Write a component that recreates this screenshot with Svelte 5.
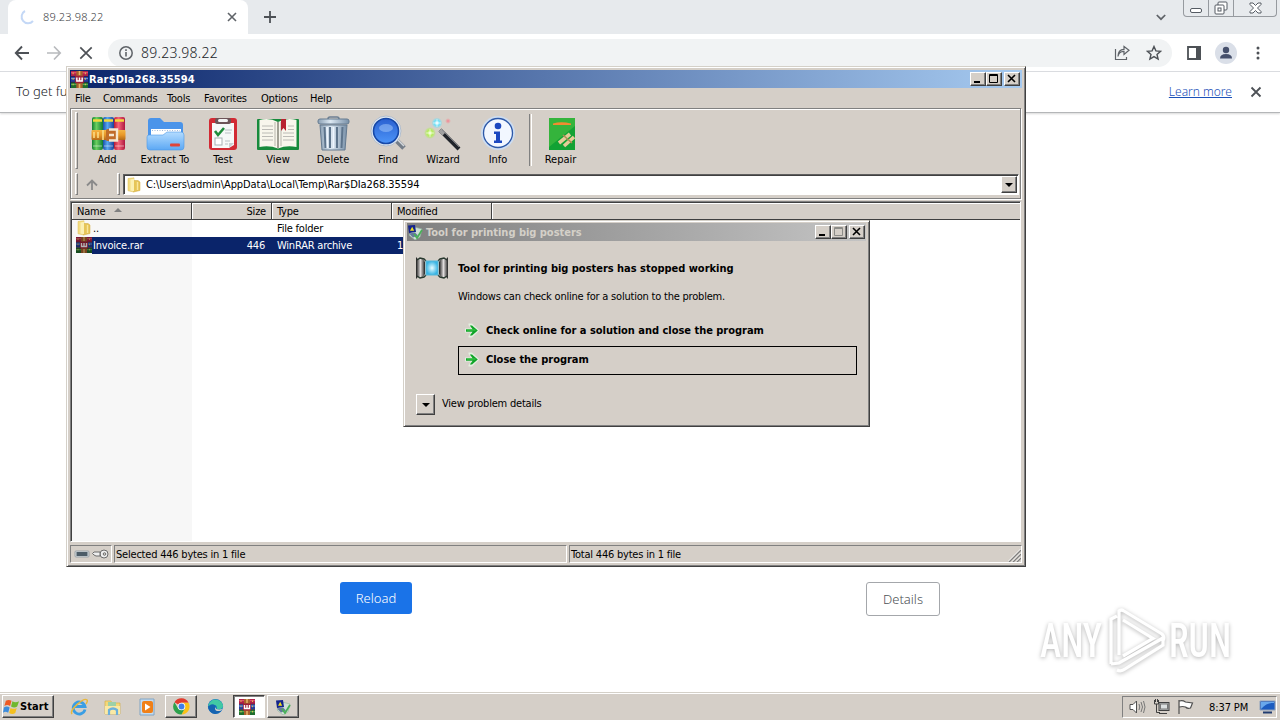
<script lang="ts">
	type Tool = { name: string; width: number };

	const menus = [
		{ label: 'File', width: 28 },
		{ label: 'Commands', width: 64 },
		{ label: 'Tools', width: 37 },
		{ label: 'Favorites', width: 57 },
		{ label: 'Options', width: 49 },
		{ label: 'Help', width: 40 }
	];

	const tools: Tool[] = [
		{ name: 'Add', width: 54 },
		{ name: 'Extract To', width: 62 },
		{ name: 'Test', width: 54 },
		{ name: 'View', width: 56 },
		{ name: 'Delete', width: 54 },
		{ name: 'Find', width: 56 },
		{ name: 'Wizard', width: 54 },
		{ name: 'Info', width: 56 }
	];

	const rows = [
		{ icon: 'folder', name: '..', size: '', type: 'File folder', modified: '' },
		{ icon: 'rar', name: 'Invoice.rar', size: '446', type: 'WinRAR archive', modified: '1' }
	];

	let selected = $state(1);
	let path = 'C:\\Users\\admin\\AppData\\Local\\Temp\\Rar$DIa268.35594';
</script>

{#snippet rarIcon(size: number)}
	<svg width={size} height={size} viewBox="0 0 16 16">
		<rect x="0" y="0" width="16" height="5.2" fill="#b02048" />
		<rect x="0" y="1" width="16" height="1.2" fill="#e0506c" />
		<rect x="0" y="5.2" width="16" height="5.4" fill="#283c98" />
		<rect x="0" y="6.4" width="16" height="1.2" fill="#5c8cdc" />
		<rect x="0" y="10.6" width="16" height="5.400" fill="#1f6c2c" />
		<rect x="0" y="12" width="16" height="1.2" fill="#50a850" />
		<path d="M2 0v16M13.500 0v16" stroke="#e0bc50" stroke-width="1" stroke-dasharray="1.500 3.700" stroke-dashoffset="-1.500" />
		<path d="M0 5.200h16M0 10.600h16" stroke="#301838" stroke-width=".6" />
		<rect x="5" y="0" width="6" height="16" fill="#a8602c" />
		<path d="M8 0v4M8 12v4" stroke="#e8b468" stroke-width="1.500" />
		<rect x="4" y="4.500" width="8" height="7" fill="#a02038" />
		<path d="M5.500 6v3.500h5V6M8 6v3" fill="none" stroke="#fff" stroke-width="1.400" />
	</svg>
{/snippet}

{#snippet folderIcon()}
	<svg width="16" height="16" viewBox="0 0 16 16">
		<path d="M2 1.500L8 .8V15l-6-1.200z" fill="#f3dd83" stroke="#dcbc50" stroke-width="0.5" />
		<path d="M7.500 3.500H12l2 1.500v8.500L7.500 15z" fill="#e6c558" stroke="#d0a83c" stroke-width="0.5" />
		<path d="M4.500 2.500L8 1.800v12.400l-3.500-.8z" fill="#fbf0b4" />
		<path d="M11.500 5v8" stroke="#f8e69c" stroke-width="1.400" />
	</svg>
{/snippet}

{#snippet printerIcon(size: number)}
	<svg width={size} height={size} viewBox="0 0 16 16">
		<path d="M7 3l8 2-2 8-5 3-6-5z" fill="#cfdfd6" stroke="#8fb49a" stroke-width="0.6" />
		<path d="M1 1.500L8 1l1 7-7 1z" fill="#14248c" />
		<path d="M5.200 2.800l2 4H3z" fill="#f0e020" />
		<path d="M2 9.500l6-1 3 3-5 2z" fill="#64789c" />
		<path d="M7 10l3 4 5-8" fill="none" stroke="#48b058" stroke-width="1.800" />
	</svg>
{/snippet}

{#snippet goArrow()}
	<svg width="16" height="16" viewBox="0 0 16 16">
		<path
			d="M1 6.500h6L4.500 3V1.500H8L15.500 8.500 8 15.500H4.500V14L7 10.500H1z"
			fill="#e4efe0"
		/>
		<path d="M2 7.200h6.600L5.800 3.500H8l5.800 5L8 13.500H5.800l2.800-3.700H2z" fill="#10a428" />
		<path d="M3 8h8.500" stroke="#50d858" stroke-width="0.8" />
	</svg>
{/snippet}

{#snippet captionButtons(disabledMax: boolean)}
	<div class="caption-buttons">
		<button aria-label="Minimize">
			<svg width="12" height="10" viewBox="0 0 12 10"><path d="M2 8h6" stroke="#000" stroke-width="2" /></svg>
		</button>
		<button aria-label="Maximize">
			<svg width="12" height="10" viewBox="0 0 12 10">
				<path
					d="M1.500 .5h8v8h-8zM1 1.500h9"
					fill="none"
					stroke={disabledMax ? '#8c8c88' : '#000'}
				/>
			</svg>
		</button>
		<button class="close" aria-label="Close">
			<svg width="12" height="10" viewBox="0 0 12 10">
				<path d="M2 1l7 7M9 1L2 8" stroke="#000" stroke-width="1.600" />
			</svg>
		</button>
	</div>
{/snippet}

{#snippet toolIcon(name: string)}
	<svg class="tool-icon" width="44" height="36" viewBox="0 0 44 36">
		{#if name === 'Add'}
			<g transform="translate(4 0)">
				<rect x="3" y="2" width="11" height="33" rx="2" fill="url(#bookGreen)" />
				<rect x="14" y="2" width="11" height="33" rx="2" fill="url(#bookBlue)" />
				<rect x="25" y="2" width="11" height="33" rx="2" fill="url(#bookRed)" />
				<path d="M4 5.500h9M15 5.500h9M26 5.500h9" stroke="#f4d83c" stroke-width="2.500" />
				<path d="M4 31h9M15 31h9M26 31h9" stroke="#fff" stroke-opacity=".25" stroke-width="2" />
				<rect x="2.500" y="15" width="34" height="10" rx="1" fill="url(#belt)" />
				<path d="M14 15v10M5 17v6M9 17v6" stroke="#fbe08c" stroke-width="1.500" />
				<rect x="17" y="14" width="11" height="12" rx="1.500" fill="#c06c28" />
				<path d="M20 14.500h8v11h-8M20 20h5" fill="none" stroke="#f4e8d0" stroke-width="2.400" />
			</g>
		{:else if name === 'Extract To'}
			<path d="M5 6q0-3 3-3h9l4 4h16q3 0 3 3v18H5z" fill="#4a94ea" />
			<rect x="8" y="14" width="30" height="14" fill="#fff" />
			<path d="M9 15.500h28" stroke="#a0b8d8" stroke-dasharray="1 1.500" />
			<path
				d="M4 22q0-2 2-2h14l4-3h14q3 0 3 3v12q0 3-3 3H7q-3 0-3-3z"
				fill="url(#folderBlue)"
				stroke="#4c98e8"
				stroke-width="0.6"
			/>
			<rect x="27" y="28.500" width="10" height="3" rx="1" fill="#e04438" />
		{:else if name === 'Test'}
			<rect x="8" y="3" width="28" height="32" rx="3" fill="#d22a34" />
			<path d="M11 8h22v22l-5 3H11z" fill="#f6f8f8" />
			<path d="M28 33v-5h5z" fill="#c8d0d4" />
			<rect x="14" y="3" width="16" height="6" rx="2" fill="#6c5458" />
			<rect x="17" y="4" width="10" height="3" rx="1.500" fill="#f4f4f4" />
			<path d="M14 16l3 4 6-7" fill="none" stroke="#1f8c3c" stroke-width="2.600" />
			<path d="M24 15h7M24 18h6M24 26h5M24 29h3" stroke="#b8c0c4" />
			<rect x="14" y="23" width="7" height="7" fill="#fff" stroke="#a8b0b4" />
		{:else if name === 'View'}
			<rect x="1" y="4" width="42" height="31" rx="1" fill="#178a3c" />
			<path d="M3.500 5q10-2.500 18.500 2 8.500-4.500 18.500-2v27q-10-2-18.500 1.500Q13.500 30 3.500 32z" fill="#f8f6ec" />
			<path d="M22 7v26" stroke="#8c8c80" stroke-width="1.600" />
			<path d="M19 7v24M25 7v24" stroke="#d8d6cc" stroke-width="2" />
			<path
				d="M6 11h11M6 14.500h11M6 18h11M6 21.500h11M6 25h11M27 18h11M27 21.500h11M27 25h11M32 11h6M32 14.500h6"
				stroke="#b4b4b0"
				stroke-width="0.9"
			/>
			<path d="M25 4h5v12l-2.500-3-2.500 3z" fill="#b82230" />
		{:else if name === 'Delete'}
			<path d="M17 4q0-2 2-2h7q2 0 2 2" fill="none" stroke="#6d7f92" stroke-width="1.500" />
			<rect x="7" y="4" width="31" height="5" rx="2" fill="url(#steel)" stroke="#657b90" />
			<path d="M9 10h27l-2 25H11z" fill="url(#steel)" stroke="#647a90" />
			<path d="M13.500 12l1 21M19 12v21M26 12v21M31.500 12l-1 21" stroke="#5d748c" stroke-width="2" />
			<path d="M16 12l.5 21M22.500 12v21" stroke="#eef6ff" stroke-width="1.600" />
		{:else if name === 'Find'}
			<path d="M29 24l9 9" stroke="#747d88" stroke-width="5" />
			<path d="M30 23l8 8" stroke="#d4d8dc" stroke-width="1.600" />
			<circle cx="20" cy="16" r="15" fill="#e2eaf2" stroke="#a4b4c8" stroke-width="0.8" />
			<circle cx="20" cy="16" r="12.500" fill="url(#lens)" stroke="#1648a8" stroke-width="1.600" />
			<ellipse cx="20" cy="13" rx="7" ry="4" fill="#b4d4ff" fill-opacity=".45" />
		{:else if name === 'Wizard'}
			<circle cx="9" cy="18" r="6" fill="url(#sparkGreen)" />
			<circle cx="16" cy="8" r="5.500" fill="url(#sparkBlue)" />
			<circle cx="27" cy="6" r="3" fill="url(#sparkRed)" />
			<path d="M9 14v8M5 18h8M16 4v8M12 8h8" stroke="#fff" stroke-opacity=".7" stroke-width="0.8" />
			<path d="M19 15l19 19" stroke="#20242a" stroke-width="4" />
			<path d="M19 15l4 4" stroke="#a0a0a0" stroke-width="4" />
			<path d="M21 15l17 17" stroke="#8a8c90" stroke-width=".8" />
		{:else if name === 'Info'}
			<circle cx="22" cy="18" r="17" fill="#ccdcf0" />
			<circle cx="22" cy="18" r="14.500" fill="#f2f7ff" stroke="#2c58a8" stroke-width="1.300" />
			<circle cx="22" cy="11" r="3.300" fill="#1c48c0" />
			<path d="M18 16.500h6v9h2v2.500h-8v-2.500h2v-6.500h-2z" fill="#1c48c0" />
		{:else}
			<rect x="10" y="3" width="26" height="32" fill="#12a234" />
			<path d="M10 3h26v8L10 32z" fill="#34b43c" />
			<path d="M14 8.500q8-2.500 18 0v1.500H14z" fill="#f08c30" />
			<path d="M20 28l11-9M25 31l10-9" stroke="#e4cc98" stroke-width="3.600" />
			<path d="M24 20l9 8" stroke="#b08c54" stroke-width="1.500" />
		{/if}
	</svg>
{/snippet}

<svg class="defs" width="0" height="0" aria-hidden="true">
	<defs>
		<linearGradient id="bookGreen"><stop stop-color="#128030" /><stop offset=".4" stop-color="#6cd060" /><stop offset="1" stop-color="#107c34" /></linearGradient>
		<linearGradient id="bookBlue"><stop stop-color="#1a50a8" /><stop offset=".4" stop-color="#58a8f0" /><stop offset="1" stop-color="#1c4098" /></linearGradient>
		<linearGradient id="bookRed"><stop stop-color="#b81c34" /><stop offset=".4" stop-color="#f46478" /><stop offset="1" stop-color="#b01840" /></linearGradient>
		<linearGradient id="belt" x2="0" y2="1"><stop stop-color="#f4b444" /><stop offset=".5" stop-color="#e89828" /><stop offset="1" stop-color="#b46818" /></linearGradient>
		<linearGradient id="folderBlue" x2="0" y2="1"><stop stop-color="#b4dcff" /><stop offset="1" stop-color="#5ca8f4" /></linearGradient>
		<linearGradient id="steel"><stop stop-color="#8ba0b4" /><stop offset=".4" stop-color="#dce8f2" /><stop offset="1" stop-color="#7890a8" /></linearGradient>
		<linearGradient id="lens" x2="0" y2="1"><stop stop-color="#2a60d0" /><stop offset="1" stop-color="#4c94f8" /></linearGradient>
		<linearGradient id="tube"><stop stop-color="#181818" /><stop offset=".5" stop-color="#e0dcdc" /><stop offset="1" stop-color="#202020" /></linearGradient>
		<radialGradient id="sparkGreen"><stop stop-color="#f4ffc8" /><stop offset=".5" stop-color="#b4ec60" /><stop offset="1" stop-color="#b4ec60" stop-opacity="0" /></radialGradient>
		<radialGradient id="sparkBlue"><stop stop-color="#fff" /><stop offset=".5" stop-color="#70e0f8" /><stop offset="1" stop-color="#70e0f8" stop-opacity="0" /></radialGradient>
		<radialGradient id="sparkRed"><stop stop-color="#f48090" /><stop offset="1" stop-color="#f49090" stop-opacity="0" /></radialGradient>
		<radialGradient id="glow"><stop stop-color="#e8fcff" /><stop offset="1" stop-color="#38b4e4" /></radialGradient>
	</defs>
</svg>

<div class="desktop">
	<div class="browser">
		<div class="tab-strip">
			<div class="tab">
				<svg width="16" height="16" viewBox="0 0 16 16">
					<path d="M6 2a6.500 6.500 0 1 0 8 10" fill="none" stroke="#c4d8f6" stroke-width="2" />
				</svg>
				<span class="tab-title">89.23.98.22</span>
				<svg width="10" height="10" viewBox="0 0 10 10"><path d="M1 1l8 8M9 1L1 9" stroke="#5f6368" stroke-width="1.600" /></svg>
			</div>
			<svg class="new-tab" width="14" height="14" viewBox="0 0 14 14"><path d="M7 1v12M1 7h12" stroke="#4d5156" stroke-width="1.800" /></svg>
			<svg class="chevron" width="10" height="7" viewBox="0 0 10 7"><path d="M.8 1l4.200 4.200L9.200 1" fill="none" stroke="#5f6368" stroke-width="1.700" /></svg>
			<div class="window-controls">
				<span><svg width="13" height="6" viewBox="0 0 13 6"><rect x=".5" y=".5" width="11" height="4" rx="1.500" fill="#fff" stroke="#555b63" /></svg></span>
				<span>
					<svg width="14" height="14" viewBox="0 0 14 14" fill="#fff" stroke="#555b63">
						<rect x="4" y="1" width="9" height="8" rx="1" /><rect x="1" y="4" width="9" height="9" rx="1" /><rect x="4" y="7" width="3" height="3" />
					</svg>
				</span>
				<span>
					<svg width="13" height="12" viewBox="0 0 13 12">
						<path d="M1 1h3l2.500 2.500L9 1h3v1.500L8.500 6 12 9.500V11H9L6.500 8.500 4 11H1V9.500L4.500 6 1 2.500z" fill="#fff" stroke="#555b63" />
					</svg>
				</span>
			</div>
		</div>

		<div class="nav-bar">
			<svg width="16" height="16" viewBox="0 0 16 16" fill="none" stroke="#4d5156" stroke-width="1.900"><path d="M15 8H2M8 1.500L1.800 8 8 14.500" /></svg>
			<svg width="16" height="16" viewBox="0 0 16 16" fill="none" stroke="#b8babd" stroke-width="1.700"><path d="M1 8h13M8 1.500L14.200 8 8 14.500" /></svg>
			<svg width="16" height="16" viewBox="0 0 16 16" stroke="#4d5156" stroke-width="1.700"><path d="M2.300 2.300l11.400 11.400M13.700 2.300L2.300 13.700" /></svg>
			<div class="omnibox">
				<svg width="16" height="16" viewBox="0 0 16 16">
					<circle cx="8" cy="8" r="6.200" fill="none" stroke="#5f6368" stroke-width="1.500" />
					<path d="M8 7v4.500M8 4.200v1.700" stroke="#5f6368" stroke-width="1.600" />
				</svg>
				<span class="url">89.23.98.22</span>
				<svg width="16" height="16" viewBox="0 0 16 16" fill="none" stroke="#5f6368" stroke-width="1.200">
					<path d="M1.500 4v10.500h11V12M4 11.500q.5-5 6-5.200V9.500L15 5.200 10 1.500v2.800Q4 4.500 4 11.500z" />
				</svg>
				<svg class="star" width="16" height="16" viewBox="0 0 16 16">
					<path d="M8 1.500l1.900 4.400 4.700.4-3.600 3.100 1.100 4.700L8 11.600l-4.100 2.500L5 9.400 1.400 6.300l4.700-.4z" fill="none" stroke="#4d5156" stroke-width="1.400" />
				</svg>
			</div>
			<svg class="side-panel" width="14" height="14" viewBox="0 0 14 14"><path d="M1 1h12v12H1z" fill="none" stroke="#4d5156" stroke-width="1.800" /><path d="M9 0h5v14H9z" fill="#4d5156" /></svg>
			<svg class="avatar" width="22" height="22" viewBox="0 0 22 22">
				<circle cx="11" cy="11" r="11" fill="#dadfe8" />
				<circle cx="11" cy="8" r="3.200" fill="#46506c" />
				<path d="M5 16.500q0-4.500 6-4.500t6 4.500z" fill="#46506c" />
			</svg>
			<svg class="kebab" width="6" height="16" viewBox="0 0 6 16" fill="#4d5156"><circle cx="3" cy="3" r="1.500" /><circle cx="3" cy="8" r="1.500" /><circle cx="3" cy="13" r="1.500" /></svg>
		</div>

		<div class="info-bar">
			<span>To get fu</span>
			<a href="#more">Learn more</a>
			<svg width="12" height="12" viewBox="0 0 12 12"><path d="M1.500 1.500l9 9M10.500 1.500l-9 9" stroke="#4d5156" stroke-width="1.800" /></svg>
		</div>

		<div class="error-actions">
			<button class="reload">Reload</button>
			<button class="details">Details</button>
		</div>
	</div>

	<div class="window winrar">
		<div class="title-bar">
			{@render rarIcon(17)}
			<span class="caption">Rar$DIa268.35594</span>
			{@render captionButtons(false)}
		</div>
		<div class="menu-bar">
			{#each menus as menu}
				<span style="width: {menu.width}px">{menu.label}</span>
			{/each}
		</div>
		<div class="rebar">
			<div class="toolbar">
				<div class="grip"></div>
				{#each tools as tool}
					<div class="tool" style="width: {tool.width}px">
						{@render toolIcon(tool.name)}
						<span>{tool.name}</span>
					</div>
				{/each}
				<div class="separator"></div>
				<div class="tool repair">
					{@render toolIcon('Repair')}
					<span>Repair</span>
				</div>
			</div>
			<div class="address-row">
				<div class="grip"></div>
				<svg class="up" width="14" height="12" viewBox="0 0 14 12"><path d="M7 11V2M2 6.500L7 1.500l5 5" fill="none" stroke="#8a8a8a" stroke-width="1.800" /></svg>
				<div class="grip"></div>
				<div class="combo">
					{@render folderIcon()}
					<span>{path}</span>
					<button aria-label="Open list"><i class="down"></i></button>
				</div>
			</div>
		</div>

		<div class="list">
			<div class="list-header">
				<div class="cell name">Name <i class="sort"></i></div>
				<div class="cell size">Size</div>
				<div class="cell type">Type</div>
				<div class="cell modified">Modified</div>
				<div class="cell rest"></div>
			</div>
			<div class="list-body">
				{#each rows as row, i}
					<!-- svelte-ignore a11y_click_events_have_key_events, a11y_no_static_element_interactions -->
					<div class="row" class:selected={i === selected} onclick={() => (selected = i)}>
						<div class="row-icon">
							{#if row.icon === 'rar'}{@render rarIcon(16)}{:else}{@render folderIcon()}{/if}
						</div>
						<div class="cell name">{row.name}</div>
						<div class="cell size">{row.size}</div>
						<div class="cell type">{row.type}</div>
						<div class="cell modified">{row.modified}</div>
					</div>
				{/each}
			</div>
		</div>

		<div class="status-bar">
			<div class="panel icons">
				<svg width="36" height="14" viewBox="0 0 36 14">
					<rect x="1" y="4" width="14" height="6" rx="1" fill="#d4dce0" stroke="#9aa2a8" />
					<rect x="2.500" y="5" width="11" height="4" fill="#4c5c68" />
					<circle cx="30" cy="7" r="4" fill="#eee" stroke="#6c6c6c" />
					<circle cx="30.500" cy="7" r="1.300" fill="#d4d0c8" stroke="#6c6c6c" />
					<path d="M26 5h-6l-1.500 1.500L20 8l2 1 4 0z" fill="#eee" stroke="#6c6c6c" />
				</svg>
			</div>
			<div class="panel">Selected 446 bytes in 1 file</div>
			<div class="panel">
				Total 446 bytes in 1 file
				<svg class="size-grip" width="13" height="13" viewBox="0 0 13 13">
					<path d="M1 13L13 1M5 13l8-8M9 13l4-4" stroke="#808080" stroke-width="1.400" />
					<path d="M0 12.500L12.500 0M4 12.500L12.500 4M8 12.500L12.500 8" stroke="#fff" stroke-width=".8" />
				</svg>
			</div>
		</div>
	</div>

	<div class="window dialog">
		<div class="title-bar inactive">
			{@render printerIcon(16)}
			<span class="caption">Tool for printing big posters</span>
			{@render captionButtons(true)}
		</div>
		<div class="dialog-head">
			<svg width="32" height="24" viewBox="0 0 32 24">
				<path d="M0 1l2 2h5l2 3v12l-2 3H2l-2 2z" fill="url(#tube)" />
				<path d="M32 1l-2 2h-5l-2 3v12l2 3h5l2 2z" fill="url(#tube)" />
				<path d="M1 4l3-2 4 1 2 2M31 4l-3-2-4 1-2 2M1 20l3 2 4-1 2-2M31 20l-3 2-4-1-2-2" fill="none" stroke="#28382e" stroke-width="1.400" />
				<rect x="10" y="5" width="12" height="14" fill="url(#glow)" stroke="#58b8d8" />
			</svg>
			<b>Tool for printing big posters has stopped working</b>
		</div>
		<p class="message">Windows can check online for a solution to the problem.</p>
		<div class="choices">
			<button>{@render goArrow()}<b>Check online for a solution and close the program</b></button>
			<button class="focused">{@render goArrow()}<b>Close the program</b></button>
		</div>
		<div class="problem-details">
			<button aria-label="Expand"><i class="down"></i></button>
			<span>View problem details</span>
		</div>
	</div>

	<div class="watermark">
		<svg width="240" height="80" viewBox="0 0 240 80">
			<text x="9" y="52" textLength="62" lengthAdjust="spacingAndGlyphs">ANY</text>
			<path
				d="M80 59V14l6-3M88 50V6q2-2 5 0l38 23q3 3 1 7M92 15l30 18.500L92 51M80 59l8-1 44-25M86 65q4 2 8-1l38-24v-5"
				fill="none"
				stroke="#fff"
				stroke-width="3.200"
			/>
			<text x="138" y="52" textLength="62" lengthAdjust="spacingAndGlyphs">RUN</text>
		</svg>
	</div>

	<div class="taskbar">
		<button class="start">
			<svg width="17" height="17" viewBox="0 0 18 18">
				<path d="M3 3q3-2 6 0L7.500 8.500q-3-2-6 0z" fill="#ee5a24" />
				<path d="M10 3.500q3 2 7 0L15 9q-3 2-6.500 0z" fill="#70b830" />
				<path d="M1 10q3-2 6 0l-1.500 5.500q-3-2-5.500 0z" fill="#3c8cdc" />
				<path d="M8 10.500q3 2 6.500 0L13 16q-3 2-6.500 0z" fill="#f4c020" />
			</svg>
			Start
		</button>
		<div class="quick-launch">
			<div class="task">
				<svg width="18" height="18" viewBox="0 0 18 18">
					<path d="M15 11.500A6 6 0 1 1 15 8.500H5" fill="none" stroke="#3a9ee4" stroke-width="2.800" />
					<path d="M2 16C-1 12 14-1 17 2q1 1-1 4" fill="none" stroke="#e8b83c" stroke-width="1.500" />
				</svg>
			</div>
			<div class="task">
				<svg width="18" height="18" viewBox="0 0 18 18">
					<path d="M1 3h6l1 2h8v11H1z" fill="#f4d878" stroke="#d4b04c" stroke-width=".7" />
					<path d="M4 4h8v4H4z" fill="#9cd0a8" />
					<path d="M1 8h15v8H1z" fill="#fae9a4" />
					<path d="M5 17v-5q4-3 8 0v5" fill="none" stroke="#6cb0dc" stroke-width="2.200" />
				</svg>
			</div>
			<div class="task">
				<svg width="18" height="18" viewBox="0 0 18 18">
					<path d="M2 1h14v16H2z" fill="#c4dcf0" stroke="#80a4c4" />
					<rect x="4" y="3" width="11" height="12" rx="2" fill="#f08018" />
					<path d="M7 5.500L12.500 9 7 12.500z" fill="#fff" />
				</svg>
			</div>
			<div class="task raised">
				<svg width="17" height="17" viewBox="0 0 18 18">
					<path d="M9 9L1.500 4.500A8.500 8.500 0 0 1 16.500 5H9z" fill="#e23b2e" />
					<path d="M9 9V5h7.500A8.500 8.500 0 0 1 9 17.500L12.500 11z" fill="#fbc116" />
					<path d="M1.500 4.500A8.500 8.500 0 0 0 9 17.500L12.500 11H5.500z" fill="#2da14c" />
					<circle cx="9" cy="9" r="4" fill="#fff" /><circle cx="9" cy="9" r="3.100" fill="#3f7de8" />
				</svg>
			</div>
			<div class="task">
				<svg width="17" height="17" viewBox="0 0 18 18">
					<circle cx="9" cy="9" r="8" fill="#1473c4" />
					<path d="M1.200 9A8 8 0 0 1 17 8q0 4-4.500 4-3 0-2-2.500Q9 5 1.200 9z" fill="#42c8a4" />
					<path d="M1.200 9q5-5 8 0-3 4 6.300 4.500Q8 20 3 14q-2-2-1.800-5z" fill="#1663b0" />
					<path d="M9.500 9.500q-1 3 4 2.600l3-.6-2 2q-6 1-6-2.500z" fill="#d4d0c8" />
				</svg>
			</div>
			<div class="task pressed">{@render rarIcon(16)}</div>
			<div class="task raised">{@render printerIcon(16)}</div>
		</div>
		<div class="tray">
			<svg width="18" height="16" viewBox="0 0 18 16" fill="none" stroke="#505050"><path d="M2 5.500h3L8.500 2v12L5 10.500H2z" fill="#fff" /><path d="M11 5q1.500 3 0 6M13 3q3 5 0 10M15.500 2q3 6 0 12" stroke="#777" /></svg>
			<svg width="17" height="16" viewBox="0 0 17 16" fill="none" stroke="#404040"><rect x="6" y="3.500" width="10" height="8" fill="#b8bcbc" /><rect x="7.500" y="5" width="7" height="5" fill="#dce0e0" stroke="#777" /><path d="M6 14.500h8M1.500 1v4h4V1M3.500 5v8.500H7M2.500 0v3M4.500 0v3" /></svg>
			<svg width="17" height="16" viewBox="0 0 17 16"><path d="M2 15V1M2.500 2q3-1 6 1l7 1-2 5q-3 1-5-1-3-1-6 0" fill="#fff" stroke="#505050" stroke-width="1.200" /></svg>
			<span class="clock">8:37 PM</span>
			<svg width="17" height="14" viewBox="0 0 17 14"><path d="M1 1h15v9H1z" fill="#1c5cc0" stroke="#8ca0bc" /><path d="M2 9q6-7 13-6V2H2z" fill="#68a8ec" /><path d="M4 12.500h9" stroke="#203c70" stroke-width="2" /></svg>
		</div>
	</div>
</div>

<style>
	:global(body) {
		overflow: hidden;
	}

	.defs {
		position: absolute;
	}

	.desktop {
		position: relative;
		display: flex;
		flex-direction: column;
		width: 1280px;
		height: 720px;
		overflow: hidden;
		background: #fff;
		color: #000;
		font-family: 'DejaVu Sans Condensed', 'DejaVu Sans', sans-serif;
		font-stretch: condensed;
		font-size: 11px;
		letter-spacing: -0.21px;
		white-space: nowrap;
	}

	svg {
		flex: none;
		display: block;
	}

	button {
		margin: 0;
		padding: 0;
		color: inherit;
		font: inherit;
		letter-spacing: inherit;
		box-sizing: border-box;
	}

	b {
		letter-spacing: -0.02px;
	}

	/* browser */
	.browser {
		flex: 1;
		font-family: 'Noto Sans', sans-serif;
		font-stretch: normal;
		font-weight: 300;
		letter-spacing: 0;
	}

	.tab-strip {
		display: flex;
		align-items: center;
		height: 34px;
		padding-left: 8px;
		background: #e7eaed;
	}

	.tab {
		display: flex;
		align-items: center;
		box-sizing: border-box;
		width: 240px;
		height: 34px;
		padding: 0 11px;
		border-radius: 8px 8px 0 0;
		background: #fff;
	}

	.tab-title {
		flex: 1;
		margin: -2px 0 0 8px;
		color: #3c4043;
		font-size: 11px;
		letter-spacing: 0.2px;
	}

	.new-tab {
		margin-left: 15px;
	}

	.chevron {
		margin-left: auto;
	}

	.window-controls {
		display: flex;
		align-self: flex-start;
		box-sizing: border-box;
		width: 94px;
		height: 17px;
		margin: 0 3px 0 17px;
		border: 1px solid #969a9f;
		border-top: 0;
		border-radius: 0 0 4px 4px;
	}

	.window-controls span {
		display: flex;
		align-items: center;
		justify-content: center;
		width: 24px;
	}

	.window-controls span:first-child svg {
		margin-top: 5px;
	}

	.window-controls span + span {
		border-left: 1px solid #969a9f;
	}

	.window-controls span:last-child {
		flex: 1;
	}

	.nav-bar {
		display: flex;
		align-items: center;
		gap: 16px;
		height: 37px;
		padding: 0 19px 0 14px;
		border-bottom: 1px solid #dadce0;
	}

	.omnibox {
		display: flex;
		align-items: center;
		flex: 1;
		height: 28px;
		margin-left: -2px;
		margin-right: -1px;
		padding: 0 10px;
		border-radius: 14px;
		background: #f1f3f4;
	}

	.url {
		flex: 1;
		margin-left: 7px;
		color: #202328;
		font-size: 14px;
		letter-spacing: 0.25px;
	}

	.star {
		margin-left: 16px;
	}

	.avatar {
		margin-left: -2px;
	}

	.kebab {
		margin-left: 2px;
	}

	.info-bar {
		display: flex;
		align-items: center;
		height: 40px;
		padding: 0 18px 0 16px;
		border-bottom: 1px solid #b4b6b8;
		box-shadow: 0 1px 2px #d8d8d8;
		color: #202328;
		font-size: 13px;
	}

	.info-bar span,
	.info-bar a {
		margin-top: -2px;
	}

	.info-bar a {
		margin-right: 18px;
		margin-left: auto;
		color: #1a50b8;
		font-size: 12px;
	}

	.error-actions {
		display: flex;
		justify-content: space-between;
		align-items: flex-start;
		width: 600px;
		margin: 469px auto 0;
		font-size: 13px;
	}

	.reload,
	.details {
		height: 32px;
		border: 0;
		border-radius: 3px;
		background: #1a73e8;
		color: #fff;
		width: 72px;
	}

	.details {
		width: 74px;
		height: 34px;
		border: 1px solid #a4a7ab;
		background: #fff;
		color: #4d5156;
	}

	/* classic windows frames */
	.window {
		position: absolute;
		display: flex;
		flex-direction: column;
		box-sizing: border-box;
		border: 1px solid;
		border-color: #d4d0c8 #404040 #404040 #d4d0c8;
		box-shadow:
			inset 1px 1px #fff,
			inset -1px -1px #808080;
		background: #d5cfc8;
	}

	.title-bar {
		display: flex;
		align-items: center;
		height: 18px;
		padding: 0 2px 0 1px;
		background: linear-gradient(90deg, #0a246a, #a6caf0);
		color: #fff;
	}

	.title-bar.inactive {
		background: linear-gradient(90deg, #808080, #c4c4c4);
		color: #d4d0c8;
	}

	.caption {
		flex: 1;
		margin-left: 1px;
		font-weight: bold;
		letter-spacing: 0.15px;
	}

	.caption-buttons {
		display: flex;
	}

	.caption-buttons button,
	.combo button,
	.problem-details button {
		display: flex;
		align-items: center;
		justify-content: center;
		width: 16px;
		height: 14px;
		border: 1px solid;
		border-color: #fff #404040 #404040 #fff;
		box-shadow: inset -1px -1px #808080;
		background: #d5cfc8;
	}

	.caption-buttons .close {
		margin-left: 2px;
	}

	.winrar {
		left: 66px;
		top: 66px;
		width: 960px;
		height: 501px;
		padding: 3px;
	}

	.menu-bar {
		display: flex;
		align-items: center;
		height: 20px;
		padding-left: 5px;
	}

	.rebar {
		box-sizing: border-box;
		height: 91px;
		border: 1px solid #808080;
		box-shadow:
			inset 1px 1px #fff,
			1px 1px #fff;
		padding: 1px;
		margin-right: 1px;
	}

	.toolbar {
		display: flex;
		height: 63px;
		padding-left: 3px;
	}

	.grip {
		box-sizing: border-box;
		width: 3px;
		height: 57px;
		margin-top: 2px;
		border: 1px solid;
		border-color: #fff #808080 #808080 #fff;
	}

	.tool {
		display: flex;
		flex-direction: column;
		align-items: center;
		padding-top: 5px;
		letter-spacing: 0;
	}

	.tool-icon {
		margin-bottom: 2px;
	}

	.tool:nth-child(2) {
		margin-left: 2px;
	}

	.separator {
		width: 1px;
		height: 52px;
		margin: 4px 1px 0 3px;
		border-left: 1px solid #808080;
		border-right: 1px solid #fff;
	}

	.repair {
		width: 55px;
	}

	.address-row {
		display: flex;
		align-items: flex-start;
		padding: 0 0 0 3px;
	}

	.address-row .grip {
		height: 22px;
		margin-top: 0;
	}

	.up {
		margin: 6px 18px 0 7px;
	}

	.combo {
		display: flex;
		align-items: center;
		flex: 1;
		box-sizing: border-box;
		height: 21px;
		margin: 1px 0 0 3px;
		padding: 0 1px 0 2px;
		border: 1px solid;
		border-color: #606060 #fff #fff #606060;
		box-shadow: inset 1px 1px #404040;
		background: #fff;
	}

	.combo span {
		flex: 1;
		margin-left: 4px;
		letter-spacing: -0.07px;
	}

	.combo button {
		height: 17px;
	}

	.down {
		border: 4px solid transparent;
		border-top-color: #000;
		border-bottom: 0;
	}

	.list {
		display: flex;
		flex-direction: column;
		box-sizing: border-box;
		height: 341px;
		margin: 2px 1px 0 0;
		border: 1px solid;
		border-color: #808080 #fff #fff #808080;
	}

	.list-header {
		display: flex;
		box-sizing: border-box;
		height: 18px;
		border-top: 1px solid #404040;
		border-left: 1px solid #404040;
		border-bottom: 1px solid #404040;
		background: #d5cfc8;
	}

	.cell {
		box-sizing: border-box;
		padding: 0 5px;
		line-height: 17px;
	}

	.list-header .cell {
		border-right: 1px solid #404040;
		box-shadow: inset 1px 1px #fff;
	}

	.list-header .rest {
		flex: 1;
		border-right: 0;
	}

	.name {
		width: 120px;
	}

	.size {
		width: 80px;
		text-align: right;
	}

	.type {
		width: 120px;
	}

	.modified {
		width: 100px;
	}

	.sort {
		display: inline-block;
		margin: 0 0 3px 6px;
		border: 4px solid transparent;
		border-bottom-color: #808080;
		border-top: 0;
	}

	.list-body {
		flex: 1;
		border-left: 1px solid #404040;
		background: linear-gradient(90deg, #f7f7f7 120px, #fff 120px);
	}

	.row {
		display: flex;
		width: 420px;
		height: 17px;
	}

	.row-icon {
		width: 20px;
		padding-left: 4px;
		box-sizing: border-box;
	}

	.row .name {
		width: 100px;
		padding-left: 1px;
	}

	.row .size {
		padding-right: 7px;
	}

	.selected .cell {
		background: #0a246a;
		color: #fff;
	}

	/* the selected file's icon is tinted with the highlight */
	.selected .row-icon {
		filter: brightness(0.7);
	}

	.status-bar {
		display: flex;
		gap: 2px;
		height: 18px;
		margin-top: 3px;
	}

	.panel {
		display: flex;
		align-items: center;
		flex: 1;
		box-sizing: border-box;
		padding-left: 1px;
		border: 1px solid;
		border-color: #808080 #fff #fff #808080;
	}

	.panel.icons {
		flex: none;
		width: 42px;
		padding-left: 3px;
	}

	.size-grip {
		align-self: flex-end;
		margin-left: auto;
	}

	/* error dialog */
	.dialog {
		left: 403px;
		top: 220px;
		width: 467px;
		height: 207px;
		padding: 2px 3px 3px;
	}

	.dialog .title-bar {
		padding-left: 0;
		padding-right: 1px;
	}

	.dialog .caption {
		margin-left: 3px;
		letter-spacing: -0.02px;
	}

	.dialog-head {
		display: flex;
		align-items: center;
		gap: 10px;
		height: 24px;
		margin: 15px 0 0 9px;
	}

	.message {
		margin: 10px 0 0 51px;
		line-height: 14px;
	}

	.choices {
		display: flex;
		flex-direction: column;
		margin: 13px 9px 0 51px;
	}

	.choices button {
		display: flex;
		align-items: center;
		gap: 6px;
		height: 29px;
		padding-left: 5px;
		padding-bottom: 3px;
		border: 1px solid transparent;
		background: none;
	}

	.choices button.focused {
		border-color: #000;
	}

	.problem-details {
		display: flex;
		align-items: center;
		gap: 7px;
		margin: 19px 0 0 9px;
	}

	.problem-details button {
		width: 19px;
		height: 21px;
	}

	.problem-details span {
		margin-top: -2px;
	}

	/* recorder logo laid over everything */
	.watermark {
		position: absolute;
		left: 1031px;
		top: 605px;
		filter: drop-shadow(0 1px 2px rgba(0, 0, 0, 0.3));
	}

	.watermark text {
		fill: #fff;
		font-family: Roboto, sans-serif;
		font-size: 48px;
		font-weight: 500;
		letter-spacing: 0;
	}

	/* taskbar */
	.taskbar {
		display: flex;
		align-items: flex-start;
		box-sizing: border-box;
		height: 28px;
		padding: 2px 3px 0 2px;
		border-top: 1px solid #d4d0c8;
		box-shadow: inset 0 1px #fff;
		background: #d5cfc8;
	}

	.start {
		display: flex;
		align-items: center;
		width: 52px;
		height: 23px;
		padding-left: 0;
		border: 1px solid;
		border-color: #fff #404040 #404040 #fff;
		box-shadow: inset -1px -1px #808080;
		background: #d5cfc8;
		font-weight: bold;
		letter-spacing: 0.1px;
	}

	.quick-launch {
		display: flex;
		gap: 2px;
		margin-left: 9px;
	}

	.task {
		display: flex;
		align-items: center;
		justify-content: center;
		box-sizing: border-box;
		width: 32px;
		height: 23px;
	}

	.raised {
		border: 1px solid;
		border-color: #fff #404040 #404040 #fff;
		box-shadow: inset -1px -1px #808080;
	}

	.pressed {
		border: 1px solid;
		border-color: #404040 #fff #fff #404040;
		box-shadow: inset 1px 1px #808080;
		background: #fff;
		padding-right: 4px;
	}

	.tray {
		display: flex;
		align-items: center;
		box-sizing: border-box;
		width: 155px;
		height: 22px;
		margin: 1px 0 0 auto;
		padding-left: 5px;
		border: 1px solid;
		border-color: #808080 #fff #fff #808080;
		gap: 7px;
	}

	.clock {
		margin-left: 8px;
		flex: 1;
		letter-spacing: -0.1px;
	}
</style>
